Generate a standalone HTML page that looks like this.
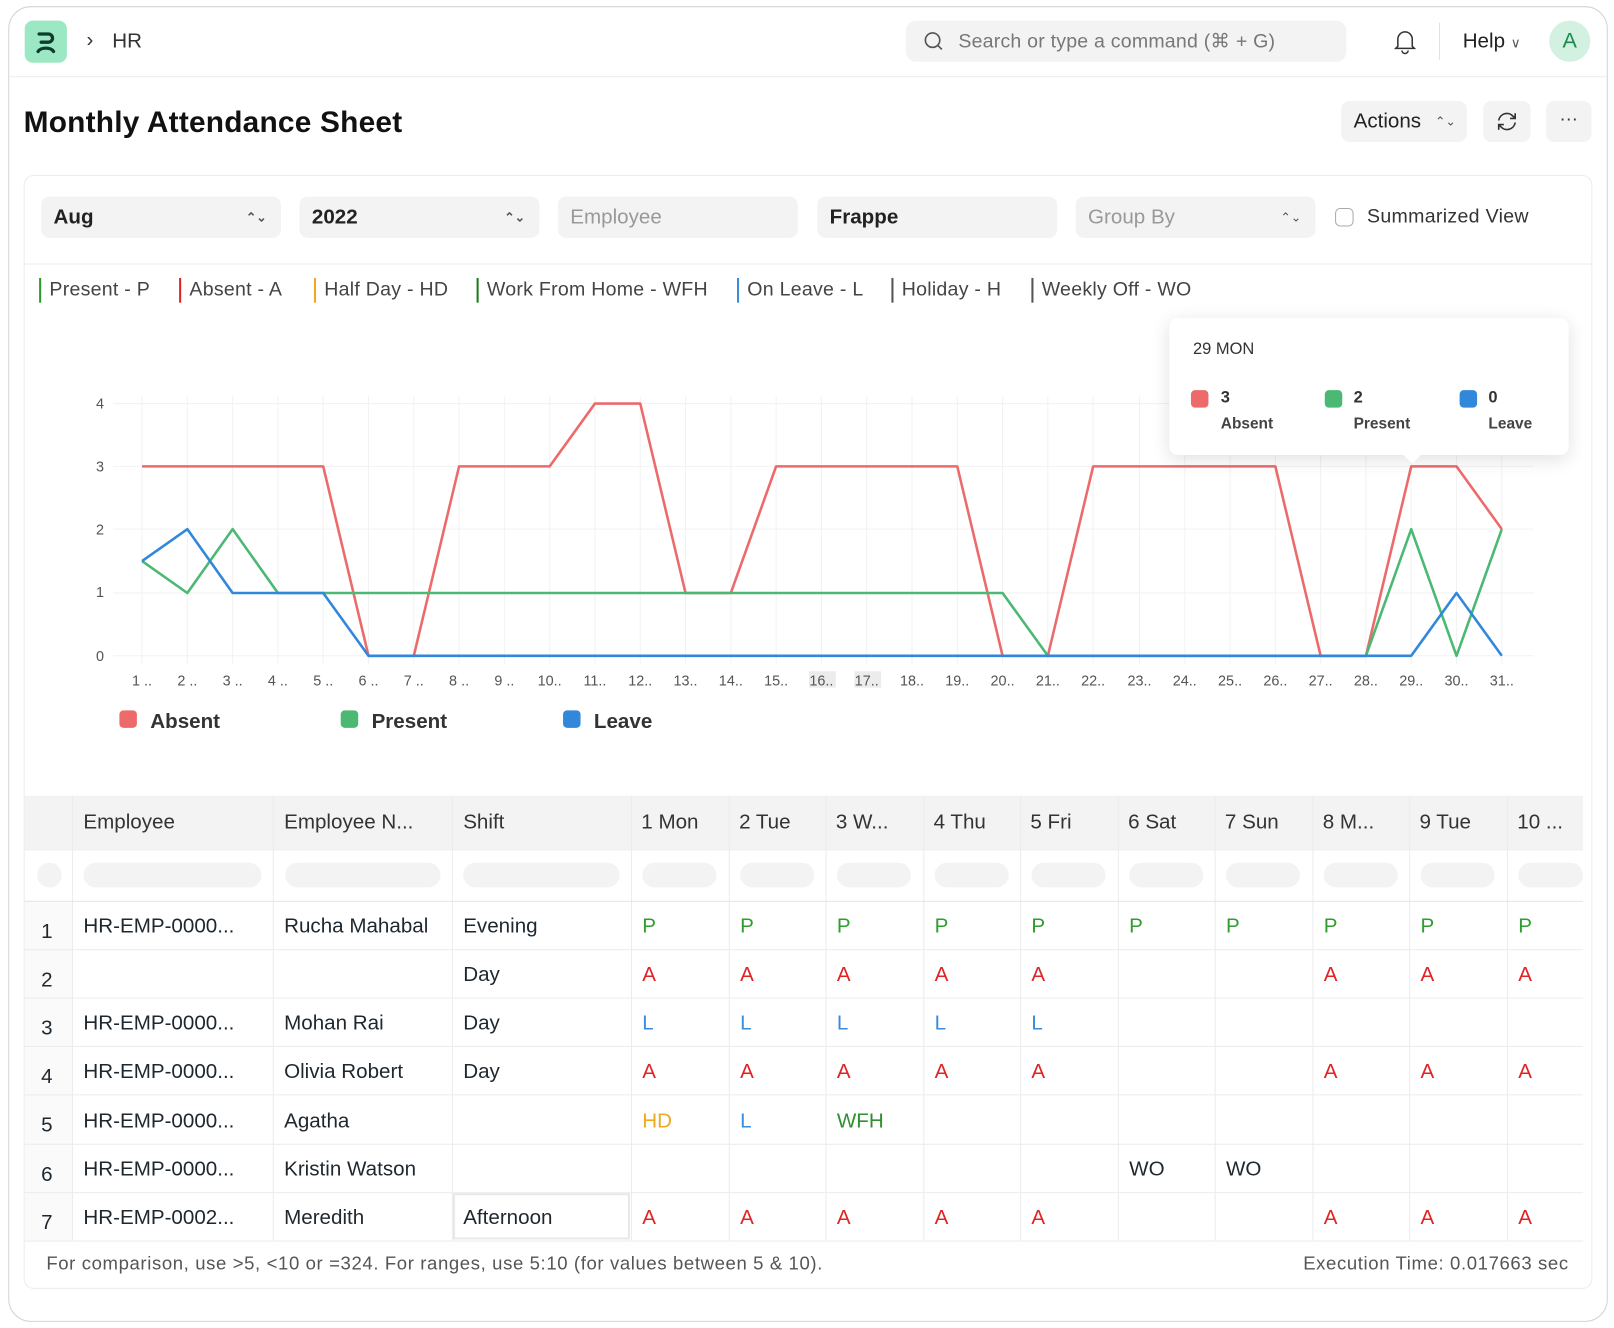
<!DOCTYPE html>
<html><head><meta charset="utf-8"><style>
*{box-sizing:border-box;margin:0;padding:0}
html,body{width:1614px;height:1328px;overflow:hidden;background:#fff;font-family:"Liberation Sans",sans-serif;color:#1f272e}
#w{position:absolute;left:0;top:0;width:1568px;height:1290px;transform:scale(1.02934,1.0295);transform-origin:0 0}
.a{position:absolute}
.frame{left:8px;top:6px;width:1554px;height:1278px;border:1.5px solid #d4d4d4;border-radius:22px;background:#fff}
.inp{position:absolute;top:191px;height:40px;width:233px;background:#f3f3f3;border-radius:8px;font-size:20px;line-height:40px;padding-left:12px}
.chev{position:absolute;right:14px;top:0;color:#555;font-size:12px;line-height:40px}
.lg{position:absolute;top:270px;font-size:19px;color:#444;border-left:2px solid;padding-left:8px;height:24px;line-height:24px;letter-spacing:0.25px}
.th{position:absolute;top:773px;height:52px;line-height:52px;font-size:20px;color:#333;padding-left:10px;overflow:hidden;white-space:nowrap}
.vl{position:absolute;top:773px;width:1px;height:432px;background:#ececec}
.hl{position:absolute;left:24px;width:1514px;height:1px;background:#ececec}
.c{position:absolute;font-size:20px;line-height:24px;white-space:nowrap}
.fb{position:absolute;top:838px;height:24px;border-radius:12px;background:#f3f3f3}
.P{color:#2f9d2f}.A{color:#e02424}.L{color:#3a8bd8}.HD{color:#f0a81c}.W{color:#2f8f2f}
</style></head><body><div id="w">
<div class="a frame"></div>
<div class="a" style="left:24px;top:20px;width:41px;height:41px;border-radius:8px;background:#9de8c4"></div>
<svg class="a" style="left:24px;top:20px" width="41" height="41" viewBox="0 0 41 41"><path d="M14 13h9a4 4 0 0 1 0 8h-7" fill="none" stroke="#0e3d2d" stroke-width="3.2" stroke-linecap="round"/><path d="M13 30a8 5 0 0 1 15 0" fill="none" stroke="#0e3d2d" stroke-width="3.2" stroke-linecap="round"/></svg>
<div class="a" style="left:84px;top:28px;font-size:20px;color:#333">›</div>
<div class="a" style="left:109px;top:29px;font-size:20px;color:#333">HR</div>
<div class="a" style="left:880px;top:20px;width:428px;height:40px;background:#f3f3f3;border-radius:10px"></div>
<svg class="a" style="left:896px;top:29px" width="22" height="22" viewBox="0 0 22 22"><circle cx="10" cy="10" r="7" fill="none" stroke="#555" stroke-width="1.6"/><path d="M15 15l4 4" stroke="#555" stroke-width="1.6"/></svg>
<div class="a" style="left:931px;top:29px;font-size:19px;color:#777;letter-spacing:0.2px">Search or type a command (⌘ + G)</div>
<svg class="a" style="left:1353px;top:27px" width="24" height="26" viewBox="0 0 24 26"><path d="M5 18V11a7 7 0 0 1 14 0v7l2 2H3z" fill="none" stroke="#333" stroke-width="1.5"/><path d="M9 22a3 3 0 0 0 6 0" fill="none" stroke="#333" stroke-width="1.5"/></svg>
<div class="a" style="left:1398px;top:22px;width:1px;height:36px;background:#e2e2e2"></div>
<div class="a" style="left:1421px;top:29px;font-size:20px;color:#222">Help <span style="font-size:13px;color:#555">∨</span></div>
<div class="a" style="left:1505px;top:20px;width:40px;height:40px;border-radius:50%;background:#d2f1e0;color:#1c8a4c;font-size:21px;text-align:center;line-height:40px">A</div>
<div class="a" style="left:9px;top:74px;width:1552px;height:1px;background:#ececec"></div>
<div class="a" style="left:23px;top:103px;font-size:29px;font-weight:bold;color:#111;letter-spacing:0.2px">Monthly Attendance Sheet</div>
<div class="a" style="left:1303px;top:98px;width:122px;height:40px;background:#f3f3f3;border-radius:8px;font-size:20px;line-height:40px;padding-left:12px;color:#222">Actions <span style="font-size:12px;position:relative;left:8px;top:-2px;color:#555">⌃⌄</span></div>
<div class="a" style="left:1441px;top:98px;width:46px;height:40px;background:#f3f3f3;border-radius:8px"></div>
<svg class="a" style="left:1452px;top:106px" width="24" height="24" viewBox="0 0 24 24"><path d="M4 11a8 8 0 0 1 14-4l2 2M20 13a8 8 0 0 1-14 4l-2-2" fill="none" stroke="#333" stroke-width="1.6"/><path d="M20 4v5h-5M4 20v-5h5" fill="none" stroke="#333" stroke-width="1.6"/></svg>
<div class="a" style="left:1502px;top:98px;width:44px;height:40px;background:#f3f3f3;border-radius:8px;text-align:center;line-height:34px;font-size:18px;color:#333">···</div>
<div class="a" style="left:23px;top:170px;width:1524px;height:1082px;border:1px solid #ececec;border-radius:10px"></div>
<div class="inp" style="left:40px;color:#222;font-weight:bold">Aug<span class="chev">⌃⌄</span></div>
<div class="inp" style="left:291px;color:#222;font-weight:bold">2022<span class="chev">⌃⌄</span></div>
<div class="inp" style="left:542px;color:#999">Employee</div>
<div class="inp" style="left:794px;color:#222;font-weight:bold">Frappe</div>
<div class="inp" style="left:1045px;color:#999">Group By<span class="chev">⌃⌄</span></div>
<div class="a" style="left:1297px;top:202px;width:18px;height:18px;border:1.5px solid #aaa;border-radius:5px"></div>
<div class="a" style="left:1328px;top:200px;font-size:19px;color:#333;letter-spacing:0.3px">Summarized View</div>
<div class="a" style="left:24px;top:256px;width:1522px;height:1px;background:#ececec"></div>
<div class="lg" style="left:38px;border-color:#2b9a2b">Present - P</div>
<div class="lg" style="left:174px;border-color:#e02424">Absent - A</div>
<div class="lg" style="left:305px;border-color:#f0a81c">Half Day - HD</div>
<div class="lg" style="left:463px;border-color:#1f7a1f">Work From Home - WFH</div>
<div class="lg" style="left:716px;border-color:#3a8bd8">On Leave - L</div>
<div class="lg" style="left:866px;border-color:#555">Holiday - H</div>
<div class="lg" style="left:1002px;border-color:#555">Weekly Off - WO</div>
<svg class="a" style="left:0;top:0" width="1568" height="760" font-family="Liberation Sans" font-size="14" fill="#555">
<g stroke="#f2f2f2" stroke-width="1">
<path d="M110 392H1490M110 453H1490M110 514H1490M110 576H1490M110 637H1490"/>
<path d="M138 385V645M182 385V645M226 385V645M270 385V645M314 385V645M358 385V645M402 385V645M446 385V645M490 385V645M534 385V645M578 385V645M622 385V645M666 385V645M710 385V645M754 385V645M798 385V645M842 385V645M886 385V645M930 385V645M974 385V645M1018 385V645M1062 385V645M1107 385V645M1151 385V645M1195 385V645M1239 385V645M1283 385V645M1327 385V645M1371 385V645M1415 385V645M1459 385V645"/>
</g>
<g text-anchor="end"><text x="101" y="397">4</text><text x="101" y="458">3</text><text x="101" y="519">2</text><text x="101" y="580">1</text><text x="101" y="642">0</text></g>
<rect x="786" y="652" width="26" height="16" fill="#ececec"/><rect x="830" y="652" width="26" height="16" fill="#ececec"/>
<g text-anchor="middle">
<text x="138" y="666">1 ..</text><text x="182" y="666">2 ..</text><text x="226" y="666">3 ..</text><text x="270" y="666">4 ..</text><text x="314" y="666">5 ..</text><text x="358" y="666">6 ..</text><text x="402" y="666">7 ..</text><text x="446" y="666">8 ..</text><text x="490" y="666">9 ..</text><text x="534" y="666">10..</text><text x="578" y="666">11..</text><text x="622" y="666">12..</text><text x="666" y="666">13..</text><text x="710" y="666">14..</text><text x="754" y="666">15..</text><text x="798" y="666">16..</text><text x="842" y="666">17..</text><text x="886" y="666">18..</text><text x="930" y="666">19..</text><text x="974" y="666">20..</text><text x="1018" y="666">21..</text><text x="1062" y="666">22..</text><text x="1107" y="666">23..</text><text x="1151" y="666">24..</text><text x="1195" y="666">25..</text><text x="1239" y="666">26..</text><text x="1283" y="666">27..</text><text x="1327" y="666">28..</text><text x="1371" y="666">29..</text><text x="1415" y="666">30..</text><text x="1459" y="666">31..</text>
</g>
<g fill="none" stroke-width="2.5" stroke-linejoin="round">
<polyline stroke="#ec6a6a" points="138,453 314,453 358,637 402,637 446,453 534,453 578,392 622,392 666,576 710,576 754,453 930,453 974,637 1018,637 1062,453 1239,453 1283,637 1327,637 1371,453 1415,453 1459,514"/>
<polyline stroke="#4bb874" points="138,545 182,576 226,514 270,576 974,576 1018,637 1327,637 1371,514 1415,637 1459,514"/>
<polyline stroke="#3187da" points="138,545 182,514 226,576 314,576 358,637 1371,637 1415,576 1459,637"/>
</g>
<rect x="116" y="690" width="17" height="17" rx="4" fill="#ec6a6a"/><text x="146" y="707" font-size="20" font-weight="bold" fill="#333">Absent</text>
<rect x="331" y="690" width="17" height="17" rx="4" fill="#4bb874"/><text x="361" y="707" font-size="20" font-weight="bold" fill="#333">Present</text>
<rect x="547" y="690" width="17" height="17" rx="4" fill="#3187da"/><text x="577" y="707" font-size="20" font-weight="bold" fill="#333">Leave</text>
</svg>
<div class="a" style="left:1136px;top:309px;width:388px;height:133px;background:#fff;border-radius:8px;box-shadow:0 4px 18px rgba(0,0,0,.12)"></div>
<div class="a" style="left:1366px;top:436px;width:12px;height:12px;background:#fff;transform:rotate(45deg)"></div>
<div class="a" style="left:1159px;top:331px;font-size:16px;color:#333">29 MON</div>
<div class="a" style="left:1157px;top:379px;width:17px;height:17px;border-radius:4px;background:#ec6a6a"></div>
<div class="a" style="left:1186px;top:378px;font-size:16px;font-weight:bold;color:#333">3</div>
<div class="a" style="left:1186px;top:403px;font-size:15px;font-weight:bold;color:#444">Absent</div>
<div class="a" style="left:1287px;top:379px;width:17px;height:17px;border-radius:4px;background:#4bb874"></div>
<div class="a" style="left:1315px;top:378px;font-size:16px;font-weight:bold;color:#333">2</div>
<div class="a" style="left:1315px;top:403px;font-size:15px;font-weight:bold;color:#444">Present</div>
<div class="a" style="left:1418px;top:379px;width:17px;height:17px;border-radius:4px;background:#3187da"></div>
<div class="a" style="left:1446px;top:378px;font-size:16px;font-weight:bold;color:#333">0</div>
<div class="a" style="left:1446px;top:403px;font-size:15px;font-weight:bold;color:#444">Leave</div>
<div class="a" style="left:24px;top:773px;width:1514px;height:52px;background:#f3f3f3"></div>
<div class="a" style="left:24px;top:875px;width:46px;height:330px;background:#fafafa"></div>
<div class="vl" style="left:70px"></div><div class="vl" style="left:265px"></div><div class="vl" style="left:439px"></div><div class="vl" style="left:613px"></div><div class="vl" style="left:708px"></div><div class="vl" style="left:802px"></div><div class="vl" style="left:897px"></div><div class="vl" style="left:991px"></div><div class="vl" style="left:1086px"></div><div class="vl" style="left:1180px"></div><div class="vl" style="left:1275px"></div><div class="vl" style="left:1369px"></div><div class="vl" style="left:1464px"></div>
<div class="hl" style="top:825px"></div><div class="hl" style="top:875px;background:#e4e4e4"></div><div class="hl" style="top:922px"></div><div class="hl" style="top:969px"></div><div class="hl" style="top:1016px"></div><div class="hl" style="top:1063px"></div><div class="hl" style="top:1111px"></div><div class="hl" style="top:1158px"></div><div class="hl" style="top:1205px"></div>
<div class="th" style="left:71px">Employee</div><div class="th" style="left:266px">Employee N...</div><div class="th" style="left:440px">Shift</div>
<div class="th" style="left:613px">1 Mon</div><div class="th" style="left:708px">2 Tue</div><div class="th" style="left:802px">3 W...</div><div class="th" style="left:897px">4 Thu</div><div class="th" style="left:991px">5 Fri</div><div class="th" style="left:1086px">6 Sat</div><div class="th" style="left:1180px">7 Sun</div><div class="th" style="left:1275px">8 M...</div><div class="th" style="left:1369px">9 Tue</div><div class="th" style="left:1464px">10 ...</div>
<div class="fb" style="left:36px;width:24px"></div><div class="fb" style="left:81px;width:173px"></div><div class="fb" style="left:277px;width:151px"></div><div class="fb" style="left:450px;width:152px"></div>
<div class="fb" style="left:624px;width:72px"></div><div class="fb" style="left:719px;width:72px"></div><div class="fb" style="left:813px;width:72px"></div><div class="fb" style="left:908px;width:72px"></div><div class="fb" style="left:1002px;width:72px"></div><div class="fb" style="left:1097px;width:72px"></div><div class="fb" style="left:1191px;width:72px"></div><div class="fb" style="left:1286px;width:72px"></div><div class="fb" style="left:1380px;width:72px"></div><div class="fb" style="left:1475px;width:63px"></div>
<div class="a" style="left:440px;top:1159px;width:172px;height:45px;border:2px solid #e8e8e8;background:#fff"></div>
<div class="c" style="left:40px;top:893px">1</div><div class="c" style="left:40px;top:940px">2</div><div class="c" style="left:40px;top:987px">3</div><div class="c" style="left:40px;top:1034px">4</div><div class="c" style="left:40px;top:1081px">5</div><div class="c" style="left:40px;top:1129px">6</div><div class="c" style="left:40px;top:1176px">7</div>
<div class="c" style="left:81px;top:888px">HR-EMP-0000...</div><div class="c" style="left:81px;top:982px">HR-EMP-0000...</div><div class="c" style="left:81px;top:1029px">HR-EMP-0000...</div><div class="c" style="left:81px;top:1077px">HR-EMP-0000...</div><div class="c" style="left:81px;top:1124px">HR-EMP-0000...</div><div class="c" style="left:81px;top:1171px">HR-EMP-0002...</div>
<div class="c" style="left:276px;top:888px">Rucha Mahabal</div><div class="c" style="left:276px;top:982px">Mohan Rai</div><div class="c" style="left:276px;top:1029px">Olivia Robert</div><div class="c" style="left:276px;top:1077px">Agatha</div><div class="c" style="left:276px;top:1124px">Kristin Watson</div><div class="c" style="left:276px;top:1171px">Meredith</div>
<div class="c" style="left:450px;top:888px">Evening</div><div class="c" style="left:450px;top:935px">Day</div><div class="c" style="left:450px;top:982px">Day</div><div class="c" style="left:450px;top:1029px">Day</div><div class="c" style="left:450px;top:1171px">Afternoon</div>
<div class="c P" style="left:624px;top:888px">P</div><div class="c P" style="left:719px;top:888px">P</div><div class="c P" style="left:813px;top:888px">P</div><div class="c P" style="left:908px;top:888px">P</div><div class="c P" style="left:1002px;top:888px">P</div><div class="c P" style="left:1097px;top:888px">P</div><div class="c P" style="left:1191px;top:888px">P</div><div class="c P" style="left:1286px;top:888px">P</div><div class="c P" style="left:1380px;top:888px">P</div><div class="c P" style="left:1475px;top:888px">P</div>
<div class="c A" style="left:624px;top:935px">A</div><div class="c A" style="left:719px;top:935px">A</div><div class="c A" style="left:813px;top:935px">A</div><div class="c A" style="left:908px;top:935px">A</div><div class="c A" style="left:1002px;top:935px">A</div><div class="c A" style="left:1286px;top:935px">A</div><div class="c A" style="left:1380px;top:935px">A</div><div class="c A" style="left:1475px;top:935px">A</div>
<div class="c L" style="left:624px;top:982px">L</div><div class="c L" style="left:719px;top:982px">L</div><div class="c L" style="left:813px;top:982px">L</div><div class="c L" style="left:908px;top:982px">L</div><div class="c L" style="left:1002px;top:982px">L</div>
<div class="c A" style="left:624px;top:1029px">A</div><div class="c A" style="left:719px;top:1029px">A</div><div class="c A" style="left:813px;top:1029px">A</div><div class="c A" style="left:908px;top:1029px">A</div><div class="c A" style="left:1002px;top:1029px">A</div><div class="c A" style="left:1286px;top:1029px">A</div><div class="c A" style="left:1380px;top:1029px">A</div><div class="c A" style="left:1475px;top:1029px">A</div>
<div class="c HD" style="left:624px;top:1077px">HD</div><div class="c L" style="left:719px;top:1077px">L</div><div class="c W" style="left:813px;top:1077px">WFH</div>
<div class="c" style="left:1097px;top:1124px">WO</div><div class="c" style="left:1191px;top:1124px">WO</div>
<div class="c A" style="left:624px;top:1171px">A</div><div class="c A" style="left:719px;top:1171px">A</div><div class="c A" style="left:813px;top:1171px">A</div><div class="c A" style="left:908px;top:1171px">A</div><div class="c A" style="left:1002px;top:1171px">A</div><div class="c A" style="left:1286px;top:1171px">A</div><div class="c A" style="left:1380px;top:1171px">A</div><div class="c A" style="left:1475px;top:1171px">A</div>
<div class="a" style="left:45px;top:1217px;font-size:18px;color:#555;letter-spacing:0.6px">For comparison, use &gt;5, &lt;10 or =324. For ranges, use 5:10 (for values between 5 &amp; 10).</div>
<div class="a" style="right:44px;top:1217px;font-size:18px;color:#555;letter-spacing:0.6px">Execution Time: 0.017663 sec</div>
</div></body></html>
